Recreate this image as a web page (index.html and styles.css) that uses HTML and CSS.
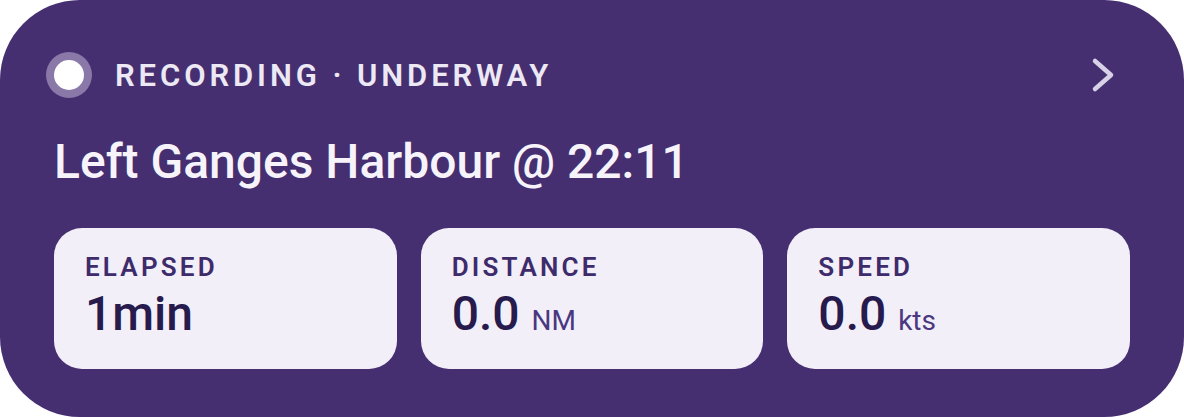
FILE: index.html
```html
<!DOCTYPE html>
<html>
<head>
<meta charset="utf-8">
<link rel="stylesheet" href="styles.css">
</head>
<body>
<div class="card">
  <div class="header">
    <span class="dot"></span>
    <span class="status">RECORDING · UNDERWAY</span>
    <svg class="chev" width="24" height="40" viewBox="0 0 24 40"><path d="M4 6 L20 20 L4 34" fill="none" stroke="#d9d1e8" stroke-width="4.5" stroke-linecap="round" stroke-linejoin="round"/></svg>
  </div>
  <div class="title">Left Ganges Harbour @ 22:11</div>
  <div class="stats">
    <div class="stat">
      <div class="label">ELAPSED</div>
      <div class="value">1min</div>
    </div>
    <div class="stat">
      <div class="label">DISTANCE</div>
      <div class="value">0.0 <span class="unit">NM</span></div>
    </div>
    <div class="stat">
      <div class="label">SPEED</div>
      <div class="value">0.0 <span class="unit">kts</span></div>
    </div>
  </div>
</div>
</body>
</html>
```
FILE: styles.css
```css
html, body { margin: 0; padding: 0; background: #ffffff; }
body { font-family: Roboto, "Noto Sans", sans-serif; }
.card {
  width: 1184px;
  height: 417px;
  box-sizing: border-box;
  background: #452f70;
  border-radius: 80px;
  padding: 60px 54px 0 54px;
  display: flex;
  flex-direction: column;
}
.header {
  display: flex;
  align-items: center;
  height: 30px;
}
.dot {
  width: 30px;
  height: 30px;
  border-radius: 50%;
  background: #ffffff;
  box-shadow: 0 0 0 8px #8a78a9;
  flex: none;
}
.status {
  margin-left: 31px;
  color: #ece8f4;
  font-size: 31px;
  font-weight: 600;
  letter-spacing: 3.9px;
  flex: 1;
}
.chev { margin-right: 15px; flex: none; }
.title {
  margin-top: 45px;
  color: #f6f3fb;
  font-size: 48px;
  font-weight: 500;
  line-height: 54px;
}
.stats {
  margin-top: 39px;
  display: flex;
  gap: 24px;
}
.stat {
  flex: 1;
  height: 141px;
  box-sizing: border-box;
  background: #f2eff9;
  border-radius: 28px;
  padding: 24px 31px 0 31px;
}
.label {
  color: #3e2b6c;
  font-size: 26px;
  font-weight: 600;
  letter-spacing: 3.2px;
  line-height: 30px;
}
.value {
  margin-top: 4px;
  color: #271a4d;
  font-size: 48px;
  font-weight: 500;
  line-height: 56px;
}
.unit {
  color: #4a3780;
  font-size: 28px;
  font-weight: 400;
}
```
